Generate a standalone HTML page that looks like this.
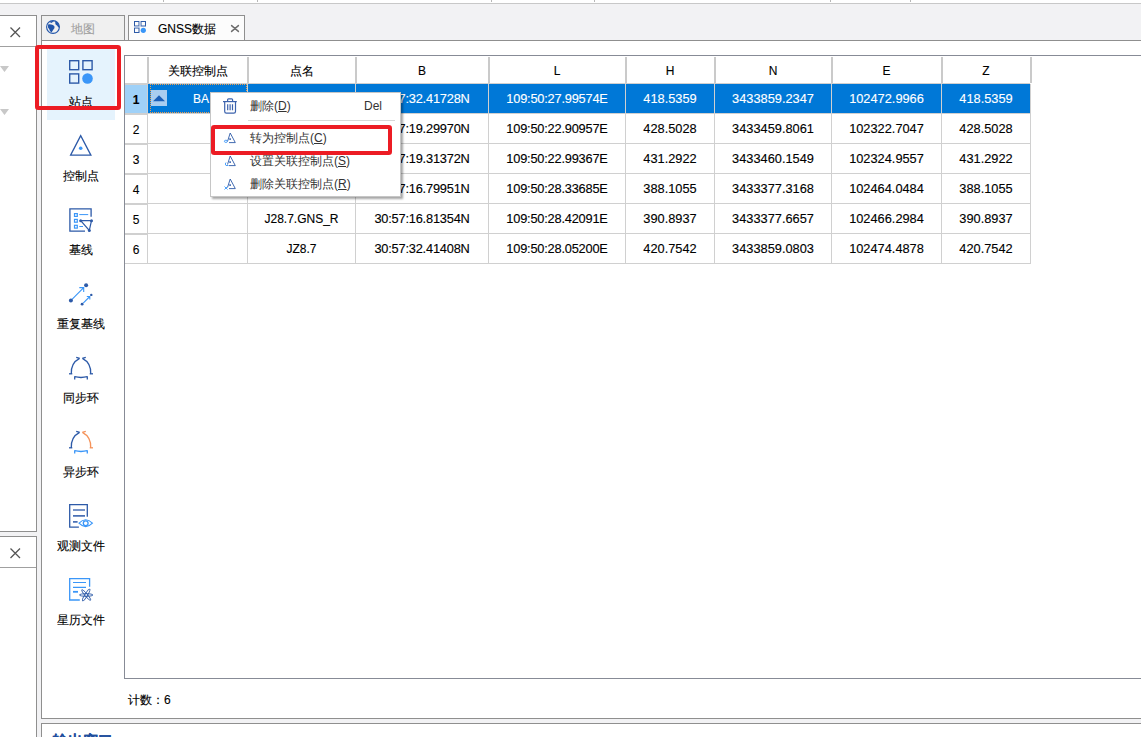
<!DOCTYPE html>
<html><head><meta charset="utf-8">
<style>
*{margin:0;padding:0;box-sizing:border-box}
html,body{width:1141px;height:737px;overflow:hidden;background:#f2f2f4;font-family:"Liberation Sans",sans-serif;font-size:12px;color:#000}
.a{position:absolute}
.t{position:absolute;white-space:nowrap;line-height:14px;-webkit-text-stroke:0.12px currentColor}
.n{font-size:12.8px}
.nc{font-size:12.8px;letter-spacing:-0.2px}
.c{text-align:center}
</style></head><body>
<div class="a" style="left:0;top:0;width:1141px;height:3px;background:#fff"></div>
<div class="a" style="left:0;top:3px;width:1141px;height:1px;background:#c8c8c8"></div>

<div class="a" style="left:163px;top:0;width:1px;height:2px;background:#b8b8b8"></div>
<div class="a" style="left:257px;top:0;width:1px;height:2px;background:#b8b8b8"></div>
<div class="a" style="left:491px;top:0;width:1px;height:2px;background:#b8b8b8"></div>
<div class="a" style="left:594px;top:0;width:1px;height:2px;background:#b8b8b8"></div>
<div class="a" style="left:830px;top:0;width:1px;height:2px;background:#b8b8b8"></div>
<div class="a" style="left:910px;top:0;width:1px;height:2px;background:#b8b8b8"></div>
<div class="a" style="left:-1px;top:15px;width:38px;height:517px;background:#fff;border:1px solid #8f8f8f"></div>
<div class="a" style="left:0;top:46px;width:36px;height:1px;background:#a0a0a0"></div>
<div class="a" style="left:-1px;top:536px;width:38px;height:220px;background:#fff;border:1px solid #8f8f8f"></div>
<div class="a" style="left:0;top:567px;width:36px;height:1px;background:#a0a0a0"></div>
<div class="a" style="left:41px;top:15px;width:84px;height:26px;background:#f0f0f0;border:1px solid #8f8f8f"></div>
<div class="a" style="left:128px;top:15px;width:117px;height:26px;background:#fcfcfc;border:1px solid #8f8f8f"></div>
<div class="t" style="left:71px;top:22px;color:#a0a0a0;font-size:12px">地图</div>
<div class="t" style="left:158px;top:22px;color:#000;font-size:12px">GNSS数据</div>
<div class="a" style="left:41px;top:40px;width:1110px;height:679px;background:#fff;border:1px solid #8f8f8f"></div>
<div class="a" style="left:41px;top:723px;width:1110px;height:30px;background:#fff;border:1px solid #8f8f8f"></div>
<div class="t" style="left:53px;top:734px;color:#1f4e9e;font-size:15px;font-weight:bold">输出窗口</div>
<div class="a" style="left:47px;top:47px;width:68px;height:73px;background:#e5f3fd"></div>
<div class="t c" style="left:41px;width:80px;top:95px">站点</div>
<div class="t c" style="left:41px;width:80px;top:169px">控制点</div>
<div class="t c" style="left:41px;width:80px;top:243px">基线</div>
<div class="t c" style="left:41px;width:80px;top:317px">重复基线</div>
<div class="t c" style="left:41px;width:80px;top:391px">同步环</div>
<div class="t c" style="left:41px;width:80px;top:465px">异步环</div>
<div class="t c" style="left:41px;width:80px;top:539px">观测文件</div>
<div class="t c" style="left:41px;width:80px;top:613px">星历文件</div>
<div class="a" style="left:124px;top:55px;width:1030px;height:624px;background:#fff;border:1px solid #878b96;border-right:none"></div>
<div class="a" style="left:125px;top:85px;width:22px;height:28px;background:#9fd1f8"></div>
<div class="a" style="left:148px;top:84px;width:882px;height:29px;background:#0078d7"></div>
<div class="a" style="left:147px;top:84px;width:1px;height:180px;background:#d0d0d0"></div>
<div class="a" style="left:147px;top:57px;width:2px;height:26px;background:#cacaca"></div>
<div class="a" style="left:247px;top:84px;width:1px;height:180px;background:#d0d0d0"></div>
<div class="a" style="left:247px;top:57px;width:2px;height:26px;background:#cacaca"></div>
<div class="a" style="left:355px;top:84px;width:1px;height:180px;background:#d0d0d0"></div>
<div class="a" style="left:355px;top:57px;width:2px;height:26px;background:#cacaca"></div>
<div class="a" style="left:488px;top:84px;width:1px;height:180px;background:#d0d0d0"></div>
<div class="a" style="left:488px;top:57px;width:2px;height:26px;background:#cacaca"></div>
<div class="a" style="left:625px;top:84px;width:1px;height:180px;background:#d0d0d0"></div>
<div class="a" style="left:625px;top:57px;width:2px;height:26px;background:#cacaca"></div>
<div class="a" style="left:714px;top:84px;width:1px;height:180px;background:#d0d0d0"></div>
<div class="a" style="left:714px;top:57px;width:2px;height:26px;background:#cacaca"></div>
<div class="a" style="left:831px;top:84px;width:1px;height:180px;background:#d0d0d0"></div>
<div class="a" style="left:831px;top:57px;width:2px;height:26px;background:#cacaca"></div>
<div class="a" style="left:941px;top:84px;width:1px;height:180px;background:#d0d0d0"></div>
<div class="a" style="left:941px;top:57px;width:2px;height:26px;background:#cacaca"></div>
<div class="a" style="left:1030px;top:84px;width:1px;height:180px;background:#d0d0d0"></div>
<div class="a" style="left:1030px;top:57px;width:2px;height:26px;background:#cacaca"></div>
<div class="a" style="left:125px;top:83px;width:905px;height:1px;background:#d0d0d0"></div>
<div class="a" style="left:125px;top:113px;width:905px;height:1px;background:#d0d0d0"></div>
<div class="a" style="left:125px;top:143px;width:905px;height:1px;background:#d0d0d0"></div>
<div class="a" style="left:125px;top:173px;width:905px;height:1px;background:#d0d0d0"></div>
<div class="a" style="left:125px;top:203px;width:905px;height:1px;background:#d0d0d0"></div>
<div class="a" style="left:125px;top:233px;width:905px;height:1px;background:#d0d0d0"></div>
<div class="a" style="left:125px;top:263px;width:905px;height:1px;background:#d0d0d0"></div>
<div class="a" style="left:125px;top:84px;width:22px;height:1px;background:#d0d0d0"></div>
<div class="a" style="left:125px;top:114px;width:22px;height:1px;background:#d0d0d0"></div>
<div class="a" style="left:125px;top:144px;width:22px;height:1px;background:#d0d0d0"></div>
<div class="a" style="left:125px;top:174px;width:22px;height:1px;background:#d0d0d0"></div>
<div class="a" style="left:125px;top:204px;width:22px;height:1px;background:#d0d0d0"></div>
<div class="a" style="left:125px;top:234px;width:22px;height:1px;background:#d0d0d0"></div>
<div class="t c" style="left:148px;width:99px;top:64px">关联控制点</div>
<div class="t c" style="left:248px;width:107px;top:64px">点名</div>
<div class="t c" style="left:356px;width:132px;top:64px">B</div>
<div class="t c" style="left:489px;width:136px;top:64px">L</div>
<div class="t c" style="left:626px;width:88px;top:64px">H</div>
<div class="t c" style="left:715px;width:116px;top:64px">N</div>
<div class="t c" style="left:832px;width:109px;top:64px">E</div>
<div class="t c" style="left:942px;width:88px;top:64px">Z</div>
<div class="t c" style="left:125px;width:22px;top:93px;font-weight:bold;">1</div>
<div class="t" style="left:193px;top:92px;color:#fff">BA</div>
<div class="t c nc" style="left:356px;width:132px;top:92px;color:#fff">30:57:32.41728N</div>
<div class="t c nc" style="left:489px;width:136px;top:92px;color:#fff">109:50:27.99574E</div>
<div class="t c n" style="left:626px;width:88px;top:92px;color:#fff">418.5359</div>
<div class="t c n" style="left:715px;width:116px;top:92px;color:#fff">3433859.2347</div>
<div class="t c n" style="left:832px;width:109px;top:92px;color:#fff">102472.9966</div>
<div class="t c n" style="left:942px;width:88px;top:92px;color:#fff">418.5359</div>
<div class="t c" style="left:125px;width:22px;top:123px;">2</div>
<div class="t c nc" style="left:356px;width:132px;top:122px;color:#000">30:57:19.29970N</div>
<div class="t c nc" style="left:489px;width:136px;top:122px;color:#000">109:50:22.90957E</div>
<div class="t c n" style="left:626px;width:88px;top:122px;color:#000">428.5028</div>
<div class="t c n" style="left:715px;width:116px;top:122px;color:#000">3433459.8061</div>
<div class="t c n" style="left:832px;width:109px;top:122px;color:#000">102322.7047</div>
<div class="t c n" style="left:942px;width:88px;top:122px;color:#000">428.5028</div>
<div class="t c" style="left:125px;width:22px;top:153px;">3</div>
<div class="t c nc" style="left:356px;width:132px;top:152px;color:#000">30:57:19.31372N</div>
<div class="t c nc" style="left:489px;width:136px;top:152px;color:#000">109:50:22.99367E</div>
<div class="t c n" style="left:626px;width:88px;top:152px;color:#000">431.2922</div>
<div class="t c n" style="left:715px;width:116px;top:152px;color:#000">3433460.1549</div>
<div class="t c n" style="left:832px;width:109px;top:152px;color:#000">102324.9557</div>
<div class="t c n" style="left:942px;width:88px;top:152px;color:#000">431.2922</div>
<div class="t c" style="left:125px;width:22px;top:183px;">4</div>
<div class="t c nc" style="left:356px;width:132px;top:182px;color:#000">30:57:16.79951N</div>
<div class="t c nc" style="left:489px;width:136px;top:182px;color:#000">109:50:28.33685E</div>
<div class="t c n" style="left:626px;width:88px;top:182px;color:#000">388.1055</div>
<div class="t c n" style="left:715px;width:116px;top:182px;color:#000">3433377.3168</div>
<div class="t c n" style="left:832px;width:109px;top:182px;color:#000">102464.0484</div>
<div class="t c n" style="left:942px;width:88px;top:182px;color:#000">388.1055</div>
<div class="t c" style="left:125px;width:22px;top:213px;">5</div>
<div class="t c " style="left:248px;width:107px;top:212px;color:#000">J28.7.GNS_R</div>
<div class="t c nc" style="left:356px;width:132px;top:212px;color:#000">30:57:16.81354N</div>
<div class="t c nc" style="left:489px;width:136px;top:212px;color:#000">109:50:28.42091E</div>
<div class="t c n" style="left:626px;width:88px;top:212px;color:#000">390.8937</div>
<div class="t c n" style="left:715px;width:116px;top:212px;color:#000">3433377.6657</div>
<div class="t c n" style="left:832px;width:109px;top:212px;color:#000">102466.2984</div>
<div class="t c n" style="left:942px;width:88px;top:212px;color:#000">390.8937</div>
<div class="t c" style="left:125px;width:22px;top:243px;">6</div>
<div class="t c " style="left:248px;width:107px;top:242px;color:#000">JZ8.7</div>
<div class="t c nc" style="left:356px;width:132px;top:242px;color:#000">30:57:32.41408N</div>
<div class="t c nc" style="left:489px;width:136px;top:242px;color:#000">109:50:28.05200E</div>
<div class="t c n" style="left:626px;width:88px;top:242px;color:#000">420.7542</div>
<div class="t c n" style="left:715px;width:116px;top:242px;color:#000">3433859.0803</div>
<div class="t c n" style="left:832px;width:109px;top:242px;color:#000">102474.4878</div>
<div class="t c n" style="left:942px;width:88px;top:242px;color:#000">420.7542</div>
<div class="a" style="left:150px;top:84px;width:97px;height:29px;border:1px dotted #f0a050"></div>
<div class="a" style="left:151px;top:90px;width:16px;height:16px;background:#a9cdf0"></div>
<div class="t" style="left:128px;top:693px">计数：6</div>
<div class="a" style="left:210px;top:92px;width:191px;height:105px;background:#fff;border:1px solid #c6c6c6;box-shadow:2px 2px 2px rgba(0,0,0,0.35)"></div>
<div class="a" style="left:248px;top:120px;width:147px;height:1px;background:#d7d7d7"></div>
<div class="t" style="left:250px;top:99px;color:#333;-webkit-text-stroke:0">删除(<u>D</u>)</div>
<div class="t" style="left:250px;top:131px;color:#333;-webkit-text-stroke:0">转为控制点(<u>C</u>)</div>
<div class="t" style="left:250px;top:154px;color:#333;-webkit-text-stroke:0">设置关联控制点(<u>S</u>)</div>
<div class="t" style="left:250px;top:177px;color:#333;-webkit-text-stroke:0">删除关联控制点(<u>R</u>)</div>
<div class="t" style="left:364px;top:99px;color:#333;-webkit-text-stroke:0">Del</div>
<svg class="a" style="left:0;top:0" width="1141" height="737" viewBox="0 0 1141 737">
<g fill="none" stroke="#555" stroke-width="1.3"><path d="M10.5 27.5l9.5 9.5M20 27.5l-9.5 9.5"/><path d="M10.5 548.5l9.5 9.5M20 548.5l-9.5 9.5"/></g><path d="M231.6 25.6 L238.4 31.4 M238.4 25.6 L231.6 31.4" fill="none" stroke="#6e6e6e" stroke-width="1.5" stroke-linecap="round"/>
<path d="M0 66h9l-4.5 6z M0 109h9l-4.5 6z" fill="#c8c8c8"/>
<!-- globe -->
<circle cx="53" cy="27" r="6.4" fill="none" stroke="#2155aa" stroke-width="1.1"/>
<path d="M48 24.5 Q50 24 53 25 Q55 26 54.5 28 Q53 30 51.5 32.5 L50 31 Q49.5 29 48 27.5 Z" fill="#2155aa"/>
<path d="M55.3 21.2 Q59.3 23 59.6 27.8 L58.2 27.2 Q57.6 25.5 55.6 24.5 Q55 23 55.3 21.2Z" fill="#2155aa"/>
<path d="M49.5 22 Q52 20.5 54 21 L51.5 23 Z" fill="#2155aa"/>
<!-- tab2 icon -->
<g fill="none" stroke="#2d5aa8" stroke-width="1"><rect x="134.5" y="21.5" width="4.5" height="4.5"/><rect x="141" y="21.5" width="4.5" height="4.5"/><rect x="134.5" y="28" width="4.5" height="4.5"/></g>
<g fill="#b8c8e4"><rect x="139.5" y="21" width="1" height="5"/><rect x="134" y="26.5" width="5" height="1"/></g>
<circle cx="143.3" cy="30.3" r="2.6" fill="#3a96f8"/>
<!-- zhan dian -->
<g fill="none" stroke="#2d5aa8" stroke-width="1.4"><rect x="69.7" y="60.7" width="9" height="9"/><rect x="82.9" y="60.7" width="9.2" height="9"/><rect x="69.7" y="73.9" width="9" height="9.2"/></g>
<circle cx="87.5" cy="78.5" r="5.3" fill="#3a96f8"/>
<!-- kong zhi dian -->
<path d="M80.7 135.6 L70.6 155.1 L90.9 155.1 Z" fill="none" stroke="#2d5aa8" stroke-width="1.3" stroke-linejoin="miter"/>
<circle cx="80.7" cy="148.3" r="1.8" fill="#3a96f8"/>
<!-- ji xian -->
<path d="M91.1 216.8 V208.9 H69.9 V231.1 H85" fill="none" stroke="#2d5aa8" stroke-width="1.3"/>
<g fill="none" stroke="#3a96f8" stroke-width="1.2"><rect x="74.5" y="213.6" width="2.8" height="2.8"/><rect x="74.5" y="219.4" width="2.8" height="2.8"/><rect x="74.5" y="225.3" width="2.8" height="2.8"/></g>
<g stroke="#3a96f8" stroke-width="1"><path d="M79.3 214.6H88.2M79.3 226.5H83"/></g>
<path d="M80.7 220.7 H91.5 L89.3 230.4 Z" fill="none" stroke="#2d5aa8" stroke-width="1.2"/>
<g fill="#2d5aa8"><circle cx="80.7" cy="220.7" r="1.5"/><circle cx="91.5" cy="220.7" r="1.5"/><circle cx="89.3" cy="230.4" r="1.5"/></g>
<!-- chong fu ji xian -->
<g stroke="#3a96f8" stroke-width="1.1" fill="none"><path d="M72 299.3 L83.7 287.6 M79.3 287.6 H83.7 V292"/><path d="M83.2 303.1 L89.8 296.5 M86.8 296.5 H89.8 V299.5"/></g>
<g fill="#2d5aa8"><circle cx="70.9" cy="300.4" r="2"/><circle cx="86.1" cy="285.2" r="2"/><circle cx="82.1" cy="304.2" r="1.4"/><circle cx="91.3" cy="294.9" r="1.2"/></g>
<!-- tong bu huan -->
<g fill="none" stroke-width="1.3" stroke-linecap="butt">
<path d="M71.3 374 Q70.6 363 79.6 358.3 M76.2 357.4 L79.8 358.3" stroke="#2d5aa8"/><path d="M69 373.8 H72.3" stroke="#2d5aa8"/>
<path d="M90.7 374 Q91.4 363 82.4 358.3 M85.8 357.4 L82.2 358.3" stroke="#2d5aa8"/><path d="M89.7 373.8 H93" stroke="#2d5aa8"/>
<path d="M74.7 376.7 Q81 378.3 87.3 376.7 M74.7 376.3 V379.5 M87.3 376.3 V379.5" stroke="#2d5aa8"/>
</g>
<!-- yi bu huan -->
<g fill="none" stroke-width="1.3" stroke-linecap="butt">
<path d="M71.3 448 Q70.6 437 79.6 432.3 M76.2 431.4 L79.8 432.3" stroke="#2d5aa8"/><path d="M69 447.8 H72.3" stroke="#2d5aa8"/>
<path d="M90.7 448 Q91.4 437 82.4 432.3 M85.8 431.4 L82.2 432.3" stroke="#f5935a"/><path d="M89.7 447.8 H93" stroke="#f5935a"/>
<path d="M74.7 450.7 Q81 452.3 87.3 450.7 M74.7 450.3 V453.5 M87.3 450.3 V453.5" stroke="#3a96f8"/>
</g>
<!-- guan ce wen jian -->
<path d="M87.3 516.8 V504.7 H69.7 V527.2 H78.9" fill="none" stroke="#2d5aa8" stroke-width="1.3"/>
<g stroke="#4a70b5" stroke-width="1.7"><path d="M73 510H85M73 515.8H85M73 521.9H77.6"/></g>
<path d="M79 523.2 Q85.7 516.3 92.4 523.2 Q85.7 530.1 79 523.2Z" fill="none" stroke="#3a96f8" stroke-width="1.2"/>
<circle cx="85.7" cy="523.2" r="2.4" fill="none" stroke="#3a96f8" stroke-width="1.3"/>
<!-- xing li wen jian -->
<path d="M89.6 586.7 V578.7 H69.7 V600 H79.8" fill="none" stroke="#3a96f8" stroke-width="1.3"/>
<g stroke="#3a96f8" stroke-width="1.2"><path d="M73 582.5H86M73 587.4H86"/></g>
<path d="M73 591.8H78" stroke="#3a96f8" stroke-width="1.8"/>
<g stroke="#2d5aa8" stroke-width="0.9" fill="none" transform="translate(86.2 595)"><ellipse rx="6.8" ry="1.3"/><ellipse rx="6.8" ry="1.3" transform="rotate(50)"/><ellipse rx="6.8" ry="1.3" transform="rotate(-58)"/></g>
<!-- red boxes -->
<rect x="37" y="47" width="82" height="61" rx="1.2" fill="none" stroke="#ec1c24" stroke-width="4"/>
<rect x="213" y="127" width="177" height="26" rx="1.2" fill="none" stroke="#ec1c24" stroke-width="4"/>
<!-- trash -->
<g fill="none" stroke="#3c63ad" stroke-width="1.2"><path d="M223 101.6 H236.8"/><path d="M227.6 101.5 V99.8 Q227.6 98.9 228.5 98.9 H231.7 Q232.6 98.9 232.6 99.8 V101.5"/><path d="M224.7 101.6 V111.4 Q224.7 113.1 226.4 113.1 H233.8 Q235.5 113.1 235.5 111.4 V101.6"/><path d="M227.7 104.2V110.3M230.1 104.2V110.3M232.5 104.2V110.3"/></g>
<!-- menu triangles -->
<g fill="none" stroke="#2d5aa8" stroke-width="0.9"><path d="M227.5 141.5 L230.2 133 L235.3 142.6 H229"/><path d="M227.5 164.5 L230.2 156 L235.3 165.6 H229"/><path d="M227.5 187.5 L230.2 179 L235.3 188.6 H229"/></g>
<g fill="#2d5aa8"><rect x="229.3" y="138.3" width="1.6" height="1.6"/><rect x="229.3" y="161.3" width="1.6" height="1.6"/><rect x="229.3" y="184.3" width="1.6" height="1.6"/></g>
<g fill="none" stroke="#3a96f8" stroke-width="0.9"><ellipse cx="225.9" cy="141.3" rx="1.5" ry="1.1"/><path d="M226 162.5 Q224.5 164 226 165.5 H228.5"/><path d="M224.5 186.5 L227.5 189.5 M227.5 186.5 L224.5 189.5"/></g>
<!-- dropdown triangle in cell -->
<path d="M153 101.2 L159 95.2 L165 101.2 Z" fill="#1b5fb8"/>

</svg>
</body></html>
